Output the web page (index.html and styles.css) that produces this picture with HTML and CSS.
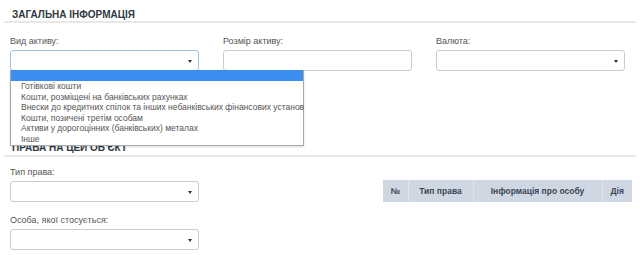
FILE: index.html
```html
<!DOCTYPE html>
<html lang="uk">
<head>
    <meta charset="UTF-8">
    <title>Загальна інформація</title>
    <link rel="stylesheet" href="styles.css">
</head>
<body>

<section class="block">
    <h3 class="block-title">Загальна інформація</h3>
    <div class="fields">
        <div class="field">
            <label>Вид активу:</label>
            <div class="select focused"><span class="arrow"></span></div>
            <!-- відкритий список -->
            <ul class="dropdown">
                <li class="selected">&nbsp;</li>
                <li>Готівкові кошти</li>
                <li>Кошти, розміщені на банківських рахунках</li>
                <li>Внески до кредитних спілок та інших небанківських фінансових установ</li>
                <li>Кошти, позичені третім особам</li>
                <li>Активи у дорогоцінних (банківських) металах</li>
                <li>Інше</li>
            </ul>
        </div>
        <div class="field">
            <label>Розмір активу:</label>
            <div class="input"></div>
        </div>
        <div class="field">
            <label>Валюта:</label>
            <div class="select"><span class="arrow"></span></div>
        </div>
    </div>
</section>

<section class="block second">
    <h3 class="block-title">Права на цей об'єкт</h3>
    <div class="rights">
        <div class="rights-form">
            <div class="field">
                <label>Тип права:</label>
                <div class="select"><span class="arrow"></span></div>
            </div>
            <div class="field">
                <label>Особа, якої стосується:</label>
                <div class="select"><span class="arrow"></span></div>
            </div>
        </div>
        <table class="rights-table">
            <thead>
                <tr>
                    <th class="col-num">№</th>
                    <th class="col-type">Тип права</th>
                    <th class="col-info">Інформація про особу</th>
                    <th class="col-act">Дія</th>
                </tr>
            </thead>
        </table>
    </div>
</section>

</body>
</html>
```

FILE: styles.css
```css
* {
    box-sizing: border-box;
    margin: 0;
    padding: 0;
}

body {
    font-family: 'Liberation Sans', Arial, sans-serif;
    color: #333;
    background: #fff;
    width: 640px;
    height: 255px;
    overflow: hidden;
}

.block-title {
    margin: 0 4px;
    padding: 9px 8px 2px 8px;
    height: 23px;
    font-size: 10px;
    font-weight: bold;
    text-transform: uppercase;
    color: #2f3a44;
    border-bottom: 2px solid #e8e8e8;
}

.fields {
    display: flex;
    gap: 24px;
    padding: 12px 0 0 10px;
}

.field {
    position: relative;
    width: 189px;
}

.field label {
    display: block;
    font-size: 9px;
    color: #555;
    line-height: 12px;
    margin-bottom: 3px;
}

.select,
.input {
    position: relative;
    height: 21px;
    border: 1px solid #ccc;
    border-radius: 3px;
    background: #fff;
}

.select.focused {
    border-color: #9ec3e6;
}

.arrow {
    position: absolute;
    right: 6px;
    top: 9px;
    border-left: 2px solid transparent;
    border-right: 2px solid transparent;
    border-top: 3px solid #333;
}

/* Відкритий список */
.dropdown {
    position: absolute;
    left: 0;
    top: 35px;
    width: 294px;
    list-style: none;
    background: #fff;
    border: 1px solid #a9a9a9;
    border-top: none;
    font-size: 8.5px;
    color: #555;
    z-index: 10;
    box-shadow: 0 1px 2px rgba(0, 0, 0, 0.15);
}

.dropdown li {
    height: 10.6px;
    line-height: 10.6px;
    padding-left: 10px;
    white-space: nowrap;
}

.dropdown li.selected {
    height: 11px;
    background: #3b8ef0;
}

.second {
    margin-top: 63px;
}

.second .block-title {
    height: 23px;
    padding-top: 8px;
}

.rights {
    display: flex;
    justify-content: space-between;
    padding: 9px 8px 0 10px;
}

.rights-form {
    display: flex;
    flex-direction: column;
    gap: 12px;
}

.rights-table {
    margin-top: 14px;
    width: 249px;
    border-collapse: collapse;
    align-self: flex-start;
}

.rights-table th {
    height: 22px;
    background: #cfd8e2;
    border-left: 1px solid #dde3ea;
    color: #3a4656;
    font-size: 8.5px;
    font-weight: bold;
    text-align: center;
}

.rights-table th:first-child {
    border-left: none;
}

.col-num { width: 25px; }
.col-type { width: 65px; }
.col-info { width: 129px; }
.col-act { width: 30px; }
```
